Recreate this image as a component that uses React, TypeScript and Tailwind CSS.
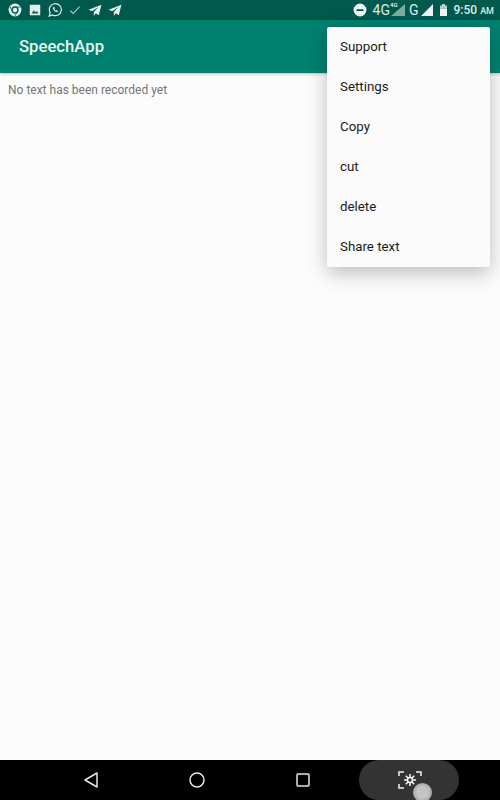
const StatusLeft = () => (
  <div className="flex items-center gap-[6px] pl-2">
    <svg width="14" height="14" viewBox="0 0 24 24" fill="#e3efec">
      <circle cx="12" cy="12" r="11" />
      <circle cx="12" cy="12" r="5" fill="#e3efec" stroke="#00695c" strokeWidth="2.500" />
      <path d="M12 7h9M7.700 14.500 3.500 6.500M16.300 14.500 11.500 22.500" stroke="#00695c" strokeWidth="1.500" />
    </svg>
    <svg width="14" height="14" viewBox="0 0 24 24" fill="#e3efec">
      <path d="M3 3h18v18H3z" />
      <path d="m6 18 4-5.500 3 3.500 2.500-2.500L18 18z" fill="#00695c" />
    </svg>
    <svg width="14" height="14" viewBox="0 0 24 24" fill="none" stroke="#e3efec" strokeWidth="2">
      <path d="M2 22.500 3.700 16.500a10.300 10.300 0 1 1 4 3.900z" />
      <path d="M8.500 8c0 4 3.500 7.500 7.500 7.500l1-2-2.500-1.200-1 1c-1.500-.6-2.500-1.700-3-3l1-1L10.500 7z" fill="#e3efec" strokeWidth="0.500" />
    </svg>
    <svg width="14" height="14" viewBox="0 0 24 24" fill="none" stroke="#c4dcd6" strokeWidth="1.800">
      <path d="m4 13 5 5L20 6" />
    </svg>
    <svg width="14" height="14" viewBox="0 0 24 24" fill="#e3efec">
      <path d="M23 3 1 11.500l6 2.500L18 7l-8 8.500V22l3.500-4.500 5 3.500z" />
    </svg>
    <svg width="14" height="14" viewBox="0 0 24 24" fill="#e3efec">
      <path d="M23 3 1 11.500l6 2.500L18 7l-8 8.500V22l3.500-4.500 5 3.500z" />
    </svg>
  </div>
);

const StatusRight = () => (
  <div className="flex items-center pr-[6px] text-[#dcebe7]">
    <svg width="14" height="14" viewBox="0 0 24 24" fill="#edf5f3" className="mr-[6px]">
      <path fillRule="evenodd" d="M12 1a11 11 0 1 0 0 22 11 11 0 0 0 0-22zM6 10.500h12v3H6z" />
    </svg>
    <span className="text-[14px] leading-none">4G</span>
    <div className="relative mr-[4px] h-3 w-[15px]">
      <svg width="15" height="12" viewBox="0 0 15 12" className="absolute left-0 top-0">
        <path d="M15 0v12H1z" fill="#80aaa0" />
      </svg>
      <span className="absolute left-0 top-[-2px] text-[6px] font-bold leading-none">4G</span>
    </div>
    <span className="mr-[2px] text-[14px] leading-none">G</span>
    <svg width="12" height="12" viewBox="0 0 12 12" className="mr-[7px]">
      <path d="M12 0v12H0z" fill="#edf5f3" />
    </svg>
    <svg width="7" height="12" viewBox="0 0 7 12" className="mr-[7px]">
      <path d="M2 0h3v1.500h2v3H0v-3h2z" fill="#b5d0c9" />
      <path d="M0 4.500h7V12H0z" fill="#edf5f3" />
    </svg>
    <span className="text-[12px] font-medium leading-none">
      9:50 <span className="text-[9px]">AM</span>
    </span>
  </div>
);

const menuItems = ["Support", "Settings", "Copy", "cut", "delete", "Share text"];

export default function App() {
  return (
    <div className="relative flex h-[800px] w-[500px] flex-col overflow-hidden bg-[#fcfcfc] font-['Roboto',sans-serif]">
      <div className="flex h-5 items-center justify-between bg-[#00594d]">
        <StatusLeft />
        <StatusRight />
      </div>
      <div className="flex h-[53px] items-center bg-[#00806f] pl-[19px] pt-[1px] shadow-[0_1px_3px_rgba(0,0,0,0.25)]">
        <span className="text-[16.700px] font-medium text-[#e6f5f1]">SpeechApp</span>
      </div>
      <div className="flex-1 px-2 pt-[9px] text-[12px] leading-4 text-[#757575]">
        No text has been recorded yet
      </div>
      <div className="flex h-10 items-center bg-black">
        <div className="flex w-[144px] justify-end pr-[45px]">
          <svg width="16" height="18" viewBox="0 0 16 18" fill="none" stroke="#e5e5e5" strokeWidth="1.500">
            <path d="M14 2v14L2 9z" strokeLinejoin="round" />
          </svg>
        </div>
        <svg width="16" height="16" viewBox="0 0 16 16" fill="none" stroke="#e5e5e5" strokeWidth="1.500" className="ml-[45px]">
          <circle cx="8" cy="8" r="7" />
        </svg>
        <svg width="14" height="14" viewBox="0 0 14 14" fill="none" stroke="#e5e5e5" strokeWidth="1.500" className="ml-[91px]">
          <rect x="1" y="1" width="12" height="12" rx="1" />
        </svg>
        <div className="relative ml-[49px] flex h-10 w-[100px] items-center justify-center rounded-full bg-[#333333]">
          <svg width="24" height="18" viewBox="0 0 24 18" fill="none" stroke="#f2f2f2" strokeWidth="1.500" className="ml-[2px]">
            <path d="M1 5V1h5M18 1h5v4M1 13v4h5M18 17h5v-4" />
            <path d="M12 3v12M6 9h12M7.800 4.800l8.400 8.400M16.200 4.800l-8.400 8.400" strokeWidth="1.600" />
            <circle cx="12" cy="9" r="2.500" fill="#333333" strokeWidth="1.500" />
          </svg>
          <div className="absolute left-[54px] top-[23px] h-[19px] w-[19px] rounded-full bg-[radial-gradient(circle,#c4c4c4_40%,#8e8e8e_100%)]" />
        </div>
      </div>
      <div className="absolute right-[10px] top-[27px] w-[163px] rounded-[2px] bg-[#fbfbfb] shadow-[0_6px_20px_rgba(0,0,0,0.25)]">
        {menuItems.map((item) => (
          <div key={item} className="flex h-10 items-center px-[13px] pb-[1px] text-[13.300px] text-[#1a1a1a]">
            {item}
          </div>
        ))}
      </div>
    </div>
  );
}
